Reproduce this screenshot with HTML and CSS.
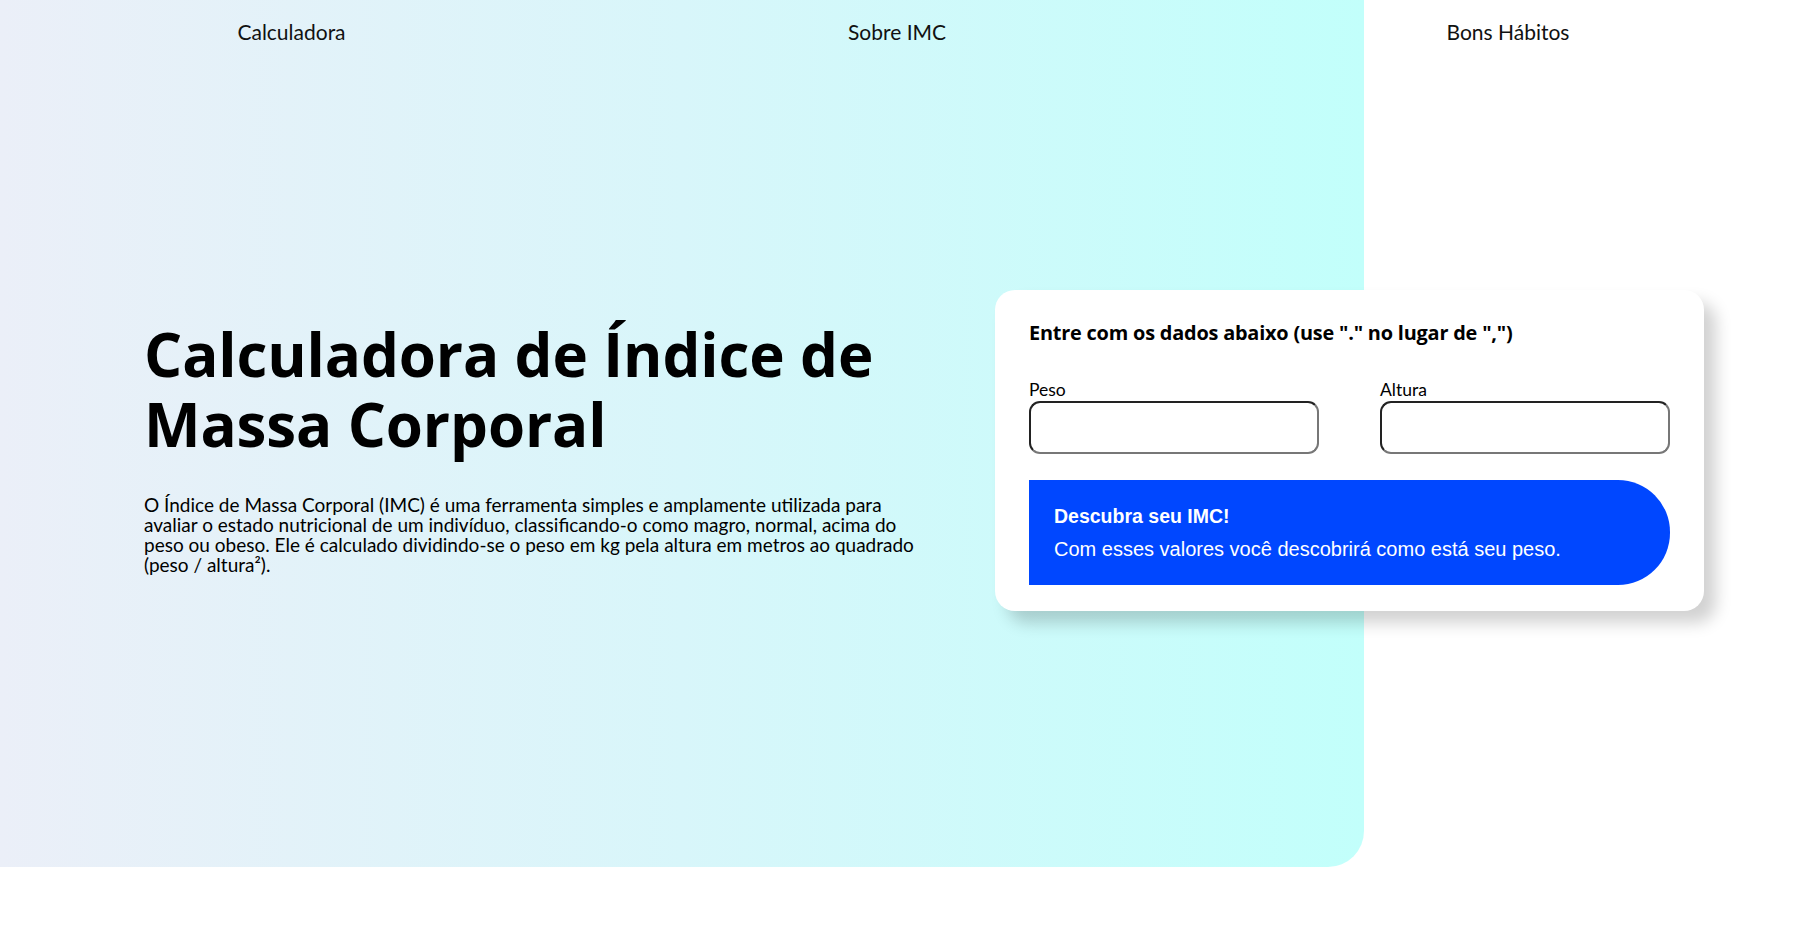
FILE: index.html
```html
<!DOCTYPE html>
<html lang="pt-BR">
<head>
<meta charset="utf-8">
<title>Calculadora de IMC</title>
<link rel="stylesheet" href="styles.css">
</head>
<body>
<div class="page">
  <div class="panel"></div>
  <div class="content">
    <nav class="nav">
      <a class="nav-item" href="#">Calculadora</a>
      <a class="nav-item" href="#">Sobre IMC</a>
      <a class="nav-item" href="#">Bons Hábitos</a>
    </nav>
    <main class="hero">
      <section class="intro">
        <h1 class="title">Calculadora de Índice de Massa Corporal</h1>
        <p class="lead">O Índice de Massa Corporal (IMC) é uma ferramenta simples e amplamente utilizada para avaliar o estado nutricional de um indivíduo, classificando-o como magro, normal, acima do peso ou obeso. Ele é calculado dividindo-se o peso em kg pela altura em metros ao quadrado (peso / altura²).</p>
      </section>
      <section class="card">
        <h2 class="card-title">Entre com os dados abaixo (use "." no lugar de ",")</h2>
        <div class="fields">
          <div class="field">
            <label class="label" for="peso">Peso</label>
            <input class="input" id="peso" type="text">
          </div>
          <div class="field">
            <label class="label" for="altura">Altura</label>
            <input class="input" id="altura" type="text">
          </div>
        </div>
        <button class="cta" type="button">
          <span class="cta-title">Descubra seu IMC!</span>
          <span class="cta-text">Com esses valores você descobrirá como está seu peso.</span>
        </button>
      </section>
    </main>
  </div>
</div>
</body>
</html>
```
FILE: styles.css
```css
* { box-sizing: border-box; }
html, body { margin: 0; padding: 0; background: #ffffff; }
body {
  font-family: Lato, "Open Sans", sans-serif;
  color: #000;
}
.page {
  display: grid;
  width: 100%;
  min-height: 947px;
}
.panel {
  grid-area: 1 / 1;
  width: 75%;
  height: 867px;
  background: linear-gradient(90deg, #ebeff8 0%, #d8f6fa 50%, #c2fffb 100%);
  border-bottom-right-radius: 36px;
}
.content {
  grid-area: 1 / 1;
  display: flex;
  flex-direction: column;
}
.nav {
  display: grid;
  grid-template-columns: 583px 628px 594px;
  height: 64px;
  padding-top: 19px;
}
.nav-item {
  justify-self: center;
  font-size: 21px;
  line-height: 25px;
  color: #111;
  text-decoration: none;
}
.hero {
  display: flex;
  align-items: flex-start;
  padding-left: 144px;
  gap: 61px;
}
.intro {
  flex: 0 0 790px;
  padding-top: 255px;
}
.title {
  margin: 0;
  font-family: "Open Sans", Lato, sans-serif;
  font-size: 60px;
  line-height: 70px;
  font-weight: 700;
  letter-spacing: -0.1px;
  width: 770px;
}
.lead {
  margin: 36px 0 0;
  font-size: 19px;
  line-height: 20px;
  color: #000;
  width: 790px;
}
.card {
  flex: 0 0 709px;
  margin-top: 226px;
  background: #fff;
  border-radius: 20px;
  padding: 32px 34px 26px;
  box-shadow: 12px 12px 16px rgba(0, 0, 0, 0.18);
}
.card-title {
  margin: 0;
  font-family: "Open Sans", Lato, sans-serif;
  font-size: 19.9px;
  line-height: 22px;
  font-weight: 700;
  letter-spacing: -0.2px;
}
.fields {
  display: grid;
  grid-template-columns: 1fr 1fr;
  gap: 61px;
  margin-top: 35px;
}
.field {
  display: flex;
  flex-direction: column;
}
.label {
  font-size: 17.5px;
  line-height: 22px;
}
.input {
  height: 53px;
  border-width: 2px;
  border-style: solid;
  border-color: #222 #777 #777 #222;
  border-radius: 11px;
  background: #fff;
  font-size: 16px;
  padding: 0 10px;
}
.cta {
  display: flex;
  flex-direction: column;
  align-items: flex-start;
  width: 100%;
  height: 105px;
  margin-top: 26px;
  padding: 25px 25px 0;
  border: none;
  border-radius: 0 52px 52px 0;
  background: #0047ff;
  color: #fff;
  font-family: "Liberation Sans", Arial, sans-serif;
  text-align: left;
  cursor: pointer;
}
.cta-title {
  font-size: 19.5px;
  line-height: 22px;
  font-weight: 700;
}
.cta-text {
  margin-top: 11px;
  font-size: 20px;
  line-height: 22px;
}
```
